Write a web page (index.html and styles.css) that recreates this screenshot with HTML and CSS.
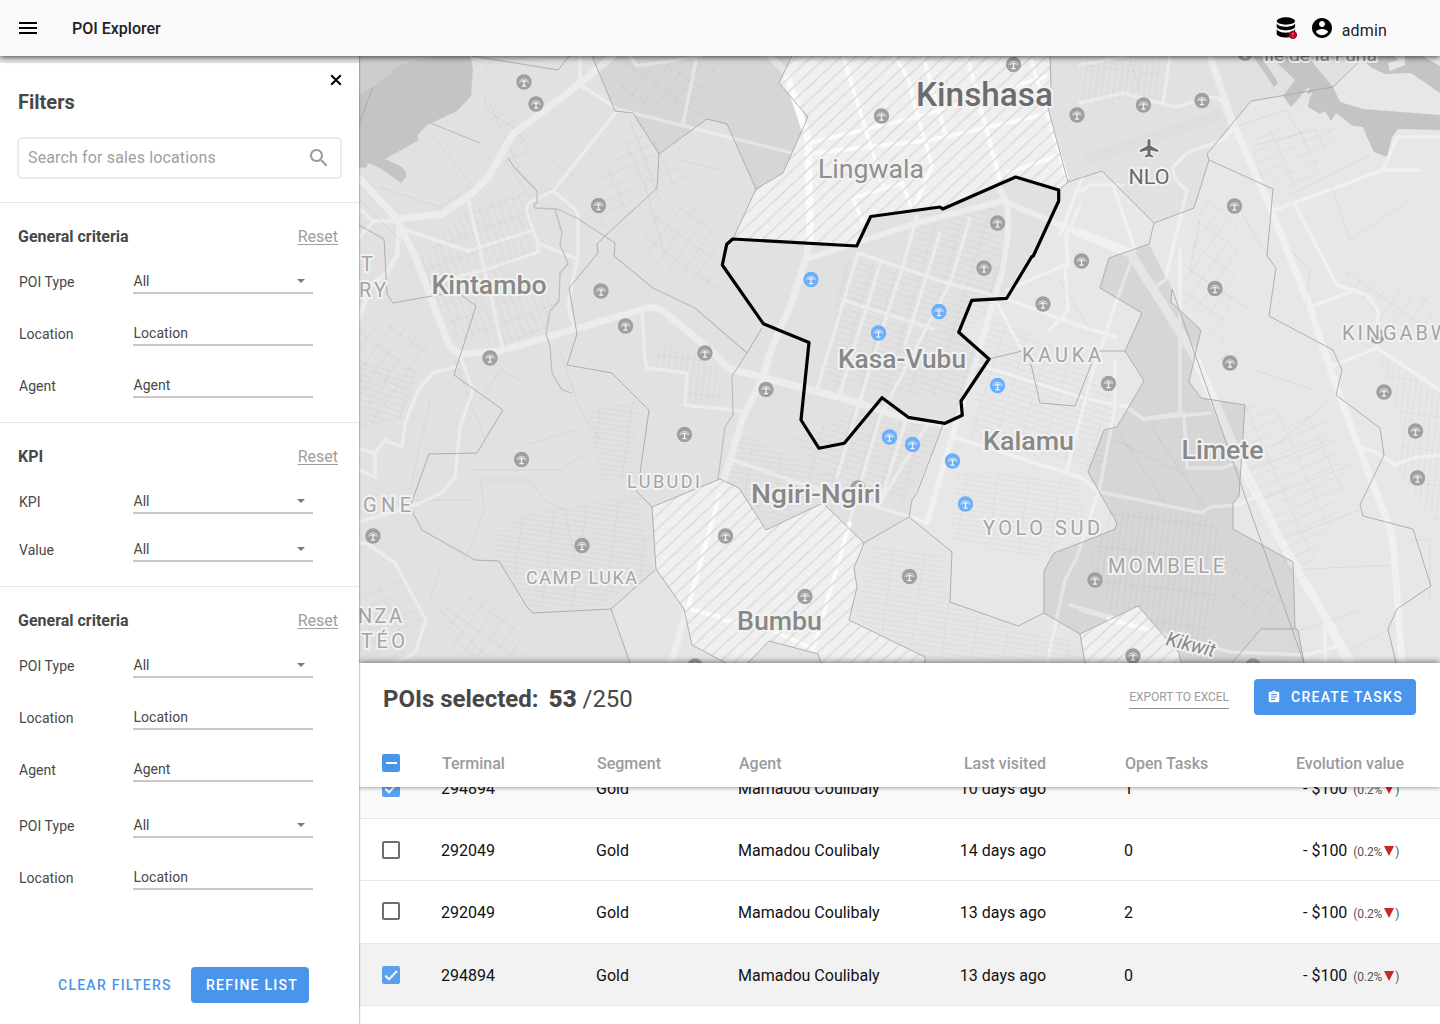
FILE: index.html
```html
<!DOCTYPE html>
<html lang="en">
<head>
<meta charset="utf-8">
<title>POI Explorer</title>
<link rel="stylesheet" href="styles.css">
</head>
<body>
<header class="topbar">
  <svg class="menu-icon" viewBox="0 0 24 24"><path d="M3 18h18v-2H3v2zm0-5h18v-2H3v2zm0-7v2h18V6H3z"/></svg>
  <h1 class="app-title">POI Explorer</h1>
  <svg class="db-icon" viewBox="0 0 24 24">
    <ellipse cx="10.900" cy="5" rx="9.200" ry="3.700"/>
    <path d="M1.700 7.500c1.200 2.300 5 3.300 9.200 3.300s8-1 9.200-3.300v3.500c-1.200 2.300-5 3.300-9.200 3.300s-8-1-9.200-3.300z"/>
    <path d="M1.700 13.300c1.200 2.300 5 3.400 9.200 3.400s8-1.100 9.200-3.400v4.900c-1.200 2.300-5 3.300-9.200 3.300s-8-1-9.200-3.300z"/>
    <circle class="alert" cx="17.900" cy="18.900" r="4.200"/>
    <path class="alert-mark" d="M17.900 16.800v2.300m0 1v1"/>
  </svg>
  <svg class="user-icon" viewBox="0 0 24 24"><path d="M12 2C6.480 2 2 6.480 2 12s4.480 10 10 10 10-4.480 10-10S17.520 2 12 2zm0 3c1.660 0 3 1.340 3 3s-1.340 3-3 3-3-1.340-3-3 1.340-3 3-3zm0 14.200c-2.500 0-4.710-1.280-6-3.220.030-1.990 4-3.080 6-3.080 1.990 0 5.970 1.090 6 3.080-1.290 1.940-3.500 3.220-6 3.220z"/></svg>
  <span class="user-name">admin</span>
</header>

<div class="workspace">
<aside class="filters">
  <div class="filters-head">
    <svg class="close-icon" viewBox="0 0 12 12"><path d="M1.200 1.200l9.600 9.600m0-9.600l-9.600 9.600"/></svg>
    <h2 class="filters-title">Filters</h2>
    <div class="search">
      <span>Search for sales locations</span>
      <svg viewBox="0 0 24 24"><path d="M15.500 14h-.790l-.280-.270C15.410 12.590 16 11.110 16 9.500 16 5.910 13.090 3 9.500 3S3 5.910 3 9.500 5.910 16 9.500 16c1.610 0 3.090-.590 4.230-1.570l.270.280v.790l5 4.990L20.490 19l-4.990-5zm-6 0C7.010 14 5 11.990 5 9.500S7.010 5 9.500 5 14 7.010 14 9.500 11.990 14 9.500 14z"/></svg>
    </div>
  </div>

  <section class="group">
    <div class="group-head"><h3>General criteria</h3><a class="reset">Reset</a></div>
    <div class="field"><label>POI Type</label><div class="control select">All</div></div>
    <div class="field"><label>Location</label><div class="control">Location</div></div>
    <div class="field"><label>Agent</label><div class="control">Agent</div></div>
  </section>

  <section class="group compact">
    <div class="group-head"><h3>KPI</h3><a class="reset">Reset</a></div>
    <div class="field"><label>KPI</label><div class="control select">All</div></div>
    <div class="field"><label>Value</label><div class="control select">All</div></div>
  </section>

  <section class="group">
    <div class="group-head"><h3>General criteria</h3><a class="reset">Reset</a></div>
    <div class="field"><label>POI Type</label><div class="control select">All</div></div>
    <div class="field"><label>Location</label><div class="control">Location</div></div>
    <div class="field"><label>Agent</label><div class="control">Agent</div></div>
    <div class="field spaced"><label>POI Type</label><div class="control select">All</div></div>
    <div class="field"><label>Location</label><div class="control">Location</div></div>
  </section>

  <div class="actions">
    <span class="text-btn">CLEAR FILTERS</span>
    <span class="btn refine">REFINE LIST</span>
  </div>
</aside>

<main class="content">
<svg class="map" viewBox="359 56 1081 607">
  <defs>
    <pattern id="hatch" width="10" height="10" patternUnits="userSpaceOnUse" patternTransform="rotate(47)"><path class="hatch-line" d="M5 0v10"/></pattern>
    <pattern id="gridA" width="7" height="19" patternUnits="userSpaceOnUse" patternTransform="rotate(-20)"><path class="street" d="M0 .5h7M.5 0v19"/></pattern>
    <pattern id="gridB" width="24" height="6" patternUnits="userSpaceOnUse" patternTransform="rotate(17)"><path class="street" d="M0 .5h24M.5 0v6"/></pattern>
    <pattern id="gridC" width="31" height="5" patternUnits="userSpaceOnUse" patternTransform="rotate(8)"><path class="street" d="M0 .5h31M.5 0v5"/></pattern>
    <pattern id="gridD" width="6" height="34" patternUnits="userSpaceOnUse" patternTransform="rotate(7)"><path class="street" d="M0 .5h6M.5 0v34"/></pattern>
    <pattern id="gridE" width="27" height="11" patternUnits="userSpaceOnUse" patternTransform="rotate(-24)"><path class="street" d="M0 .5h27M.5 0v11"/></pattern>
    <pattern id="gridF" width="13" height="22" patternUnits="userSpaceOnUse" patternTransform="rotate(35)"><path class="street" d="M0 .5h13M.5 0v22"/></pattern>
    <symbol id="poi" viewBox="-8 -8 16 16">
      <circle r="7.700"/>
      <path class="arc" d="M-4.700 .6A4.800 4.800 0 0 1 4.700 .6"/>
      <path class="dome" d="M-3.500 .7A3.600 3.600 0 0 1 3.500 .7L2.200 .1 1.100-.3H-1.100L-2.200 .1z"/>
      <path class="mast" d="M0-2v6M-2.100 4.200h4.200"/>
    </symbol>
  </defs>

  <rect class="land" x="359" y="56" width="1081" height="607"/>
  <!-- districts -->
  <path class="land-east" d="M1058 190L1068 182 1102 171 1154 223 1194 208 1209 160 1207 154 1251 101 1333 87 1363 56H1440V663H925L849 620 857 587 854 568 864 543 909 517 912 500 943 425 962 415 961 401 989 359 959 332 972 300 1007 298 1033 256 1058 201z"/>
  <path class="land-south" d="M611 609L655 570 684 609 692 645 726 663H630zM864 543L909 517 952 552 950 602 1018 626 1044 613 1080 634 1085 663H925L849 620 857 587 854 568zM769 641L818 654 821 663H748z"/>
  <path class="land-dark" d="M592 56L615 111 633 113 659 154 707 119 727 124 756 189 783 173 808 117 779 83 792 56z"/>
  <path class="land-dark" d="M1149 244L1109 258 1100 288 1142 313 1125 351 1144 381 1117 427 1104 430 1088 472 1117 523 1115 529 1080 543 1054 553 1044 571V613L1080 634 1138 606 1179 653 1181 663H1304L1298 630 1295 628 1293 562 1233 529V503L1239 496 1245 405 1201 398 1189 382 1194 360 1201 330 1171 302 1172 289z"/>
  <path class="land-mid" d="M1232 663L1261 629H1295L1304 663z"/>

  <!-- minor street grids -->
  <g class="grids">
    <path fill="url(#gridA)" d="M418 262L470 206 525 192 530 225 536 252 500 268 560 300 545 330 505 347 455 335z"/>
    <path fill="url(#gridE)" d="M485 100L515 103 530 160 560 190 540 195 500 150zM600 175L640 125 700 190 650 185 600 230zM1250 130L1340 125 1310 190 1260 180zM1240 400L1330 420 1350 480 1300 590 1250 500zM360 600L400 570 420 620 400 660 360 660z"/>
    <path fill="url(#gridF)" d="M625 60L720 70 700 115 620 100zM650 215L710 200 720 290 640 260zM360 330L420 320 440 345 380 420 360 410zM1340 270L1430 300 1440 340 1400 345zM1205 190L1240 230 1225 350 1180 300zM1230 540L1292 590 1290 625 1230 610zM440 600L500 590 530 660 450 660z"/>
    <path fill="url(#gridC)" d="M520 515L640 495 650 570 600 607 530 607 500 560 490 540zM735 430L840 480 770 525 740 488 722 480zM590 410L640 400 632 480 600 480zM870 545L945 555 950 602 1015 630 1070 640 1080 660H930L855 618zM957 470L1080 480 1085 520 1040 560 950 540z"/>
    <path fill="url(#gridB)" d="M847 255L1000 300 960 340 985 360 958 400 820 385zM860 410L940 425 905 500 850 500 790 440zM990 310L1060 350 1120 400 1100 470 970 440zM920 222L1003 205 1008 265 990 300 900 265zM360 360L420 370 400 420 360 430z"/>
    <path fill="url(#gridD)" d="M1110 510L1210 515 1230 560 1200 650 1110 610 1090 560zM665 340L720 370 720 400 690 405 686 373 650 365zM1376 350L1440 395V530L1395 465 1400 420zM1080 60L1160 60 1165 100 1080 100z"/>
    <path fill="url(#gridE)" d="M800 80L1050 70 1045 175 940 200 870 210 800 160zM660 510L720 490 840 520 850 620 760 640 700 640z"/>
  </g>
  <path class="lane" d="M486 70c3-15 30-12 60-8M485 95v14l30 20 15 20M360 200l40 40M380 187l60 20 30-20M505 160l30 45M427 130l50 60M550 160l30 20M630 120l30 80M645 185l20 70M680 160l40 10M480 400l20-30 20 10M470 470l90 0 30-20M480 480h50l15 20 20 10 10 50M480 480l5 30-20 50M455 360l30 80M560 350l20 60 20 30M575 430l-50 15M415 500l60 0M440 570l-10 30 60 60M430 400l-20 90M1060 280l30 50M1130 60l10 30M1225 130l60-20 20 30M1255 145l60-15 10 20M1290 195l80-40M1240 210l30 50M1250 470l80-30M1260 500l90-35M1280 540l80-30M1290 570l100-5M1270 450l60-50M1200 380l30-30M1255 370l60 20M1110 420l60 90M1150 425l60 90M1115 440l70 35M1330 180l20 60 60-40M1290 250l20 20-5 40M1300 630l60-20M1350 650l40-20M1120 150l100-40M1200 220l-10 50 60 40M1240 350l-20 20M1410 540l20 0v60"/>
  <path class="runway" d="M1085 160L1220 115"/>

  <!-- water -->
  <path class="shallow" d="M359 56H432L400 65 373 87 359 94z"/>
  <path class="water" d="M432 56H470L473 68 471 96 457 111 427 125 417 136 419 140 385 159 402 167 406 172V177L401 183 380 168 368 163 366 168 359 167V94L373 87 400 65z"/>
  <path class="water" d="M1253 56h8l17 27-4 4zM1270 56L1295 80 1283 96 1291 107 1306 90 1310 97 1308 107 1320 114 1325 111 1331 121 1336 113 1353 126 1363 127 1367 137 1374 152 1387 157 1392 137 1398 129 1440 130V115L1363 109 1340 102 1333 87 1307 56zM1358 56L1372 68 1385 74 1411 73 1440 93V66L1422 56H1405V65L1390 71 1388 63 1398 60 1395 56z"/>
  <path class="quay" d="M1292 108l17-20M1295 113l17-20"/>

  <!-- roads -->
  <g class="roads">
    <path class="w7" d="M359 178L397 219 442 214 470 195 488 178Q495 165 513 134L578 85 613 56"/>
    <path class="w4" d="M580 84V56M582 86L617 109 800 155M617 111L553 191 532 201Q525 207 527 214L538 243V252L487 269 440 282M553 191L574 208 578 214V256L568 305 575 331M403 229L468 251 532 231M468 199L503 349M540 244L577 259M359 208L373 221H397M359 238L374 221M642 313L645 360 647 368 687 373 685 405 741 411M460 356L473 390 460 427 455 477 442 493 410 507 359 522M458 366L433 373 418 390 405 423 402 447 385 440 375 453 359 449M375 455V477L359 470M359 543L368 544 395 563 426 620 415 653 395 663M630 56L637 66 700 56M697 56L683 124"/>
    <path class="w7" d="M398 222L415 256 448 343Q454 353 462 354L500 351 647 308Q655 306 663 311L697 339 720 359 727 368 860 403 902 418 945 424"/>
    <path class="w5" d="M399 230L397 256 386 274 370 286 359 319"/>
    <path class="w7" d="M770 56L790 76 808 139 810 223Q810 245 806 257L793 299 770 353 763 377 743 417 720 493 688 607 671 663"/>
    <path class="w6" d="M810 258L917 223 1003 201 1080 233 1130 253M967 56L1000 189 1008 206V232L1003 269 993 303 975 365 955 427 927 522"/>
    <path class="w4" d="M858 253L950 284 1007 299 1080 326 1116 337M880 264L840 393M858 253L817 390M917 216L903 266 893 296 858 407 837 477M940 233L905 345M970 219L950 283 880 417 850 520 813 650M845 301L933 329M930 420L880 503M907 417L880 503M733 460L790 480 927 522M953 437L1080 477 1100 492 1202 513 1210 507 1237 505 1257 497M980 365L1080 397 1127 407 1143 419 1210 413M1067 470L1090 380 1115 305 1133 257M1115 360V407L1100 487 1077 557 1065 580 1047 663M997 303L1022 350M1007 290L1065 265 1068 310 1050 330M1066 233L1068 265M1065 240L1080 205M1082 178L1060 235M1180 250V413L1143 419M1184 413L1187 468H1223L1238 462M1070 605L1140 625"/>
    <path class="w7" d="M1210 56L1233 123 1270 207 1310 307 1327 360 1357 443 1387 520Q1394 540 1395 567L1402 663"/>
    <path class="w9" d="M1080 233L1130 253 1160 300 1193 353 1243 467 1280 540 1327 620 1350 663"/>
    <path class="w4" d="M1080 103L1123 93 1175 107 1213 97Q1221 98 1223 103L1232 130 1223 140 1187 153 1173 167Q1172 180 1187 190L1165 280 1155 287M1113 185L1135 250M1080 192L1090 185H1123M1275 210L1383 170 1397 137 1440 137M1385 170H1420M1295 205L1337 285 1367 295 1378 310 1377 348 1330 367M1310 307L1350 292M1377 348L1440 390M1360 447L1375 452 1395 465 1413 458 1440 455M1080 610L1160 633 1230 652 1307 655 1338 646M1325 620V663M1170 56L1163 102M1080 65L1125 56"/>
  </g>

  <!-- highlighted northern and southern zones -->
  <g class="zones">
    <path class="zone" d="M792 56L779 83 808 117 783 173 756 189 733 239 857 246 871 217 940 207 943 209 1016 177 1059 190 1068 182 1048 108 1051 84 1050 56z"/>
    <path class="zone" d="M720 479L652 507 656 569 684 609 692 645 726 663H748L769 641 818 654 821 663H925V657L849 620 857 587 854 568 864 543 823 503 766 530 739 488zM1138 606L1080 634 1085 663H1181L1179 653z"/>
  </g>
  <g class="zone-roads">
    <path d="M843 56L883 186M893 56Q910 75 913 99L932 166 915 205M923 56L947 139M810 143L920 116 1047 76M813 153L930 140 1047 114M863 223L853 198 902 183 912 209M967 56L1000 180M1007 173L1057 156M1030 56L1067 179M720 493L688 607M850 522L813 650M690 609L720 617M722 620L760 625 812 648M1107 619L1150 630"/>
    <path class="wide" d="M787 76L808 139 810 223V242"/>
  </g>
  <g class="zone-hatch">
    <path d="M792 56L779 83 808 117 783 173 756 189 733 239 857 246 871 217 940 207 943 209 1016 177 1059 190 1068 182 1048 108 1051 84 1050 56z"/>
    <path d="M720 479L652 507 656 569 684 609 692 645 726 663H748L769 641 818 654 821 663H925V657L849 620 857 587 854 568 864 543 823 503 766 530 739 488zM1138 606L1080 634 1085 663H1181L1179 653z"/>
  </g>

  <!-- administrative boundaries -->
  <path class="river" d="M428 122L480 143M508 158L514 167 537 191V203L534 204 535 208 557 209 577 218 615 243M555 209L562 233 560 244 568 264 560 273 559 301 550 311 546 334 550 346 552 373 562 390 572 393M614 256L653 288 695 308 747 353 732 376 733 415 725 427 718 479"/>
  <path class="border" d="M472 56L558 70 569 56M592 56L615 111 633 113 659 154 707 119 727 124 756 189M659 154L657 188 605 236 597 244 598 253 569 288 577 334 569 359 567 365 612 373 649 410 640 473 637 492 652 507M615 243L614 256M359 225L384 239 387 294 393 303 443 294M460 294L476 306 454 375 503 410 477 453 429 454 410 507 422 530 475 560 499 561 527 607 533 613 611 609 655 570M611 609L630 663M373 87L359 124M943 425L917 493 912 500 909 517 864 543M909 517L952 552 950 602 1018 626 1044 613M989 359L1022 351M1099 351H1125M1030 360L1040 403 1075 406 1096 352M762 328L747 353M1068 182L1102 171 1154 223 1149 244M1154 223L1194 208 1209 160 1207 154 1251 101 1333 87 1363 58M1209 160L1273 189 1267 256 1276 268 1269 316 1333 350 1342 370 1336 395 1380 428 1384 455 1360 505 1363 516 1413 529 1431 586 1397 609 1388 629 1396 663M1232 663L1261 629H1295"/>
  <path class="border" d="M1149 244L1109 258 1100 288 1142 313 1125 351 1144 381 1117 427 1104 430 1088 472 1117 523 1115 529 1080 543 1054 553 1044 571V613L1080 634 1138 606 1179 653 1181 663M1304 663L1298 630 1295 628 1293 562 1233 529V503L1239 496 1245 405 1201 398 1189 382 1194 360 1201 330 1171 302 1172 289z"/>
  <path class="border" d="M792 56L779 83 808 117 783 173 756 189 733 239M1059 190L1068 182 1048 108 1051 84 1050 56M720 479L652 507 656 569 684 609 692 645 726 663M748 663L769 641 818 654 821 663M925 663V657L849 620 857 587 854 568 864 543 823 503 766 530 739 488 720 479M1080 634L1085 663"/>

  <!-- points of interest -->
  <g class="pois">
    <use href="#poi" x="516" y="74" width="16" height="16"/><use href="#poi" x="528" y="96" width="16" height="16"/>
    <use href="#poi" x="590.500" y="197.500" width="16" height="16"/><use href="#poi" x="593" y="283" width="16" height="16"/>
    <use href="#poi" x="617.500" y="318" width="16" height="16"/><use href="#poi" x="482" y="350" width="16" height="16"/>
    <use href="#poi" x="697" y="345" width="16" height="16"/><use href="#poi" x="758" y="381.500" width="16" height="16"/>
    <use href="#poi" x="676.500" y="426.500" width="16" height="16"/><use href="#poi" x="513.500" y="451.500" width="16" height="16"/>
    <use href="#poi" x="365" y="528" width="16" height="16"/><use href="#poi" x="574" y="537.500" width="16" height="16"/>
    <use href="#poi" x="717.500" y="528" width="16" height="16"/><use href="#poi" x="797" y="588.500" width="16" height="16"/>
    <use href="#poi" x="901.500" y="568.500" width="16" height="16"/><use href="#poi" x="850" y="480" width="16" height="16"/>
    <use href="#poi" x="687" y="658" width="16" height="16"/><use href="#poi" x="873.500" y="108" width="16" height="16"/>
    <use href="#poi" x="1005.500" y="56.500" width="16" height="16"/><use href="#poi" x="1069" y="107" width="16" height="16"/>
    <use href="#poi" x="1135.500" y="97" width="16" height="16"/><use href="#poi" x="1194" y="92.500" width="16" height="16"/>
    <use href="#poi" x="989.500" y="215" width="16" height="16"/><use href="#poi" x="976" y="260" width="16" height="16"/>
    <use href="#poi" x="1035" y="296" width="16" height="16"/><use href="#poi" x="1073.500" y="253" width="16" height="16"/>
    <use href="#poi" x="1226.500" y="198" width="16" height="16"/><use href="#poi" x="1207" y="280.500" width="16" height="16"/>
    <use href="#poi" x="1222" y="355" width="16" height="16"/><use href="#poi" x="1100.500" y="375.500" width="16" height="16"/>
    <use href="#poi" x="1369" y="328" width="16" height="16"/><use href="#poi" x="1376" y="384" width="16" height="16"/>
    <use href="#poi" x="1407.500" y="423" width="16" height="16"/><use href="#poi" x="1409.500" y="470" width="16" height="16"/>
    <use href="#poi" x="1087" y="572" width="16" height="16"/><use href="#poi" x="1125" y="648" width="16" height="16"/>
    <use href="#poi" x="1245" y="658" width="16" height="16"/><use href="#poi" x="1237" y="45" width="16" height="16"/>
  </g>

  <!-- place labels -->
  <g class="place">
    <text class="city" x="916" y="105.500" textLength="137" lengthAdjust="spacingAndGlyphs">Kinshasa</text>
    <text class="light" x="818" y="177.500" textLength="106" lengthAdjust="spacingAndGlyphs">Lingwala</text>
    <text x="431.500" y="293.700" textLength="115" lengthAdjust="spacingAndGlyphs">Kintambo</text>
    <text x="838" y="367.700" textLength="128" lengthAdjust="spacingAndGlyphs">Kasa-Vubu</text>
    <text x="751" y="502.700" textLength="130" lengthAdjust="spacingAndGlyphs">Ngiri-Ngiri</text>
    <text x="983" y="450" textLength="91" lengthAdjust="spacingAndGlyphs">Kalamu</text>
    <text x="737" y="630" textLength="85" lengthAdjust="spacingAndGlyphs">Bumbu</text>
    <text x="1181.500" y="459" textLength="82" lengthAdjust="spacingAndGlyphs">Limete</text>
  </g>
  <g class="quarter">
    <text x="361" y="271">T</text>
    <text x="359" y="297" textLength="27">RY</text>
    <text x="363" y="512" textLength="48">GNE</text>
    <text x="358" y="623" textLength="44">NZA</text>
    <text x="361" y="648" textLength="44">TÉO</text>
    <text class="small" x="627" y="488" textLength="73">LUBUDI</text>
    <text class="small" x="526" y="584" textLength="111">CAMP LUKA</text>
    <text x="1022" y="361.500" textLength="79">KAUKA</text>
    <text x="1342" y="340" textLength="122">KINGABWA</text>
    <text x="983" y="535" textLength="117">YOLO SUD</text>
    <text x="1108" y="573" textLength="116">MOMBELE</text>
  </g>
  <g class="spot">
    <text x="1128.500" y="184" textLength="41" lengthAdjust="spacingAndGlyphs">NLO</text>
    <text class="river-name" x="1264" y="61" textLength="113" lengthAdjust="spacingAndGlyphs">Île de la Funa</text>
    <text class="road-name" transform="translate(1165 645) rotate(14)" textLength="50" lengthAdjust="spacingAndGlyphs">Kikwit</text>
    <path class="plane" d="M1149 139c1.200 0 1.500 1.200 1.500 2.500v4.300l7.700 4.200v2l-7.700-1.800v4.100l2.600 1.600v1.500l-4.100-.9-4.100.9v-1.500l2.600-1.600v-4.100l-7.700 1.800v-2l7.700-4.200v-4.300c0-1.300.3-2.500 1.500-2.500z"/>
  </g>

  <g class="pois selected">
    <use href="#poi" x="803" y="271.500" width="16" height="16"/><use href="#poi" x="931" y="303.500" width="16" height="16"/>
    <use href="#poi" x="870.500" y="325" width="16" height="16"/><use href="#poi" x="989.500" y="377.500" width="16" height="16"/>
    <use href="#poi" x="881.500" y="429" width="16" height="16"/><use href="#poi" x="904.500" y="436.500" width="16" height="16"/>
    <use href="#poi" x="944.500" y="453" width="16" height="16"/><use href="#poi" x="957.500" y="496" width="16" height="16"/>
  </g>
  <path class="selection" d="M732.700 239L856.700 246 870.700 216.500 940 207 942.700 209 1015.700 177 1058.700 190V201L1033.300 256 1031.700 256.700 1006.700 298.300 971.700 300.300 958.700 332.300 989 359 961 401 962.300 415.300 945 423.300 908.300 417.300 882 397.700 844.300 443.300 819 448.300 801 420 809 342.500 763.300 323.700 722.300 265 726.700 244.300z"/>
</svg>

<section class="results">
  <div class="results-head">
    <h2 class="results-title">POIs selected: <b>53</b> <span>/250</span></h2>
    <a class="export">EXPORT TO EXCEL</a>
    <span class="btn create">
      <svg viewBox="0 0 24 24"><path d="M19 3h-4.180C14.400 1.840 13.300 1 12 1s-2.400.840-2.820 2H5c-1.100 0-2 .900-2 2v14c0 1.100.900 2 2 2h14c1.100 0 2-.900 2-2V5c0-1.100-.900-2-2-2zm-7 0c.550 0 1 .450 1 1s-.450 1-1 1-1-.450-1-1 .450-1 1-1zm2 14H7v-2h7v2zm3-4H7v-2h10v2zm0-4H7V7h10v2z"/></svg>
      CREATE TASKS
    </span>
  </div>
  <div class="row columns">
    <span class="box partial"></span><span>Terminal</span><span>Segment</span><span>Agent</span><span class="visited">Last visited</span><span>Open Tasks</span><span class="evo-head">Evolution value</span>
  </div>
  <div class="rows">
    <div class="row first">
      <span class="box checked"><svg viewBox="0 0 18 18"><path d="M3.200 9.500l3.800 3.800 8-8.300"/></svg></span><span>294894</span><span>Gold</span><span>Mamadou Coulibaly</span><span class="visited">10 days ago</span><span>1</span><span class="evo">- $100<small>(0.2%<i class="down"></i>)</small></span>
    </div>
    <div class="row">
      <span class="box"></span><span>292049</span><span>Gold</span><span>Mamadou Coulibaly</span><span class="visited">14 days ago</span><span>0</span><span class="evo">- $100<small>(0.2%<i class="down"></i>)</small></span>
    </div>
    <div class="row third">
      <span class="box"></span><span>292049</span><span>Gold</span><span>Mamadou Coulibaly</span><span class="visited">13 days ago</span><span>2</span><span class="evo">- $100<small>(0.2%<i class="down"></i>)</small></span>
    </div>
    <div class="row active">
      <span class="box checked"><svg viewBox="0 0 18 18"><path d="M3.200 9.500l3.800 3.800 8-8.300"/></svg></span><span>294894</span><span>Gold</span><span>Mamadou Coulibaly</span><span class="visited">13 days ago</span><span>0</span><span class="evo">- $100<small>(0.2%<i class="down"></i>)</small></span>
    </div>
  </div>
</section>
</main>
</div>
</body>
</html>
```
FILE: styles.css
```css
* { box-sizing: border-box; }
body {
  margin: 0;
  width: 1440px;
  height: 1024px;
  overflow: hidden;
  display: flex;
  flex-direction: column;
  background: #fff;
  font-family: Roboto, "Liberation Sans", sans-serif;
  color: #484848;
}
h1, h2, h3 { margin: 0; }

/* top bar */
.topbar {
  flex: none;
  height: 56px;
  display: flex;
  align-items: center;
  padding: 0 53px 0 16px;
  background: #fafafa;
  box-shadow: 0 1px 6px rgba(0, 0, 0, .75);
  position: relative;
  z-index: 3;
}
.menu-icon { width: 24px; height: 24px; }
.app-title { margin: 1px auto 0 32px; font-size: 16px; font-weight: 500; letter-spacing: 0; color: #222; }
.db-icon { width: 24px; height: 24px; margin-right: 11px; }
.db-icon .alert { fill: #b8002a; }
.db-icon .alert-mark { stroke: #e9a3b1; stroke-width: 1; }
.user-icon { width: 24px; height: 24px; margin-right: 8px; }
.user-name { font-size: 16px; margin-top: 4px; letter-spacing: .15px; color: #222; }

.workspace { flex: 1; min-height: 0; display: flex; }

/* filter panel */
.filters {
  flex: none;
  width: 359px;
  display: flex;
  flex-direction: column;
  border-top: 7px solid #e6e6e6;
  background: #fff;
  box-shadow: 0 0 2px rgba(0, 0, 0, .6);
  position: relative;
  z-index: 2;
}
.filters-head { height: 139px; padding: 11px 17px 0; display: flex; flex-direction: column; }
.close-icon { width: 12px; height: 12px; align-self: flex-end; fill: none; stroke: #000; stroke-width: 2; }
.filters-title { margin: 4px 0 0 1px; font-size: 20px; line-height: 24px; font-weight: 700; }
.search {
  height: 42px;
  margin-top: 23px;
  padding: 0 9px;
  display: flex;
  align-items: center;
  justify-content: space-between;
  border: 2px solid #ebebeb;
  border-radius: 5px;
  color: #a0a0a0;
  font-size: 16px;
  letter-spacing: .14px;
}
.search span { margin-top: -1px; }
.search svg { width: 24px; height: 24px; fill: #9b9b9b; }

.group { border-top: 1px solid #e7e7e7; padding: 24px 20px 24px 18px; display: flex; flex-direction: column; gap: 26px; }
.group-head { display: flex; justify-content: space-between; height: 20px; line-height: 20px; font-size: 16px; margin-bottom: -5px; }
.group-head h3 { font-size: 16px; font-weight: 700; }
.reset { margin-right: 1px; color: #9e9e9e; text-decoration: underline; text-underline-offset: 2px; text-decoration-thickness: 1px; }
.field { display: flex; height: 26px; font-size: 14px; letter-spacing: .03px; }
.field label { width: 115px; padding-left: 1px; line-height: 29px; }
.field.spaced { margin-top: 4px; }
.control { width: 180px; padding-left: .5px; line-height: 26px; border-bottom: 2px solid #c8c8c8; }
.select { display: flex; justify-content: space-between; }
.select::after { content: ""; margin: 11px 8.500px 0 0; height: 0; border: 4.500px solid transparent; border-top: 4.500px solid #7a7a7a; border-bottom: 0; }
.compact { gap: 22px; }
.compact .group-head { margin-bottom: -1px; }

.actions { margin: auto 50px 21px 58px; display: flex; align-items: center; justify-content: space-between; height: 36px; }
.text-btn { font-size: 14px; font-weight: 500; letter-spacing: 1.250px; color: #4a95ea; }
.btn {
  height: 36px;
  display: flex;
  align-items: center;
  justify-content: center;
  border-radius: 4px;
  background: #4a95ec;
  color: #fff;
  font-size: 14px;
  font-weight: 500;
  letter-spacing: 1.250px;
}
.refine { width: 118px; padding-left: 4px; }

/* map */
.content { flex: 1; min-width: 0; display: flex; flex-direction: column; }
.map { flex: none; width: 1081px; height: 607px; display: block; }
.map path { stroke-linejoin: round; }
.land { fill: #e1e1e1; }
.land-east { fill: #e7e7e7; }
.land-south { fill: #e5e5e5; }
.land-dark { fill: #d6d6d6; }
.land-mid { fill: #d9d9d9; }
.shallow { fill: #cdcdcd; }
.water { fill: #c4c4c4; }
.quay { fill: none; stroke: #e4e4e4; stroke-width: 2; }
.street, .lane { fill: none; stroke: #000; stroke-opacity: .05; stroke-width: 1; }
.grids { opacity: .6; }
.runway { stroke: #dedede; stroke-width: 11; }
.roads path { fill: none; stroke: #fff; stroke-linecap: round; }
.roads { opacity: .38; }
.w4 { stroke-width: 3.500; }
.w5 { stroke-width: 5; }
.w6 { stroke-width: 6; }
.w7 { stroke-width: 7; }
.w9 { stroke-width: 9; }
.zone { fill: #f1f1f1; fill-opacity: .88; }
.zone-roads { fill: none; stroke: #fbfbfb; stroke-width: 4; }
.zone-roads .wide { stroke-width: 7; }
.zone-hatch { fill: url(#hatch); }
.hatch-line { stroke: #d8d8d8; stroke-width: 1.400; }
.river { fill: none; stroke: #bebebe; stroke-width: 1.300; }
.border { fill: none; stroke: #a8a8a8; stroke-width: .9; }
.pois { fill: #9f9f9f; }
.selected { fill: #6aaffc; }
.arc { fill: none; stroke: #ececec; stroke-width: .8; }
.dome { fill: #f0f0f0; fill-opacity: .85; }
.mast { fill: none; stroke: #f3f3f3; stroke-width: 1.300; }
.map text { font-family: Roboto, sans-serif; stroke: #f2f2f2; stroke-width: 4px; stroke-linejoin: round; paint-order: stroke; }
.place text { font-size: 26px; font-weight: 500; fill: #888; }
.place .light { font-weight: 400; fill: #8f8f8f; }
.place .city { font-size: 34px; fill: #6c6c6c; }
.quarter text { font-size: 20px; fill: #a4a4a4; }
.quarter .small { font-size: 18px; }
.spot text { font-size: 21px; font-weight: 400; fill: #6a6a6a; }
.spot .river-name { font-size: 17px; fill: #888; }
.spot .road-name { font-size: 20px; font-style: italic; fill: #858585; }
.plane { fill: #6c6c6c; stroke: #f0f0f0; stroke-width: 2.500; paint-order: stroke; }
.selection { fill: none; stroke: #000; stroke-width: 3.200; }

/* results */
.results {
  flex: 1;
  min-height: 0;
  display: flex;
  flex-direction: column;
  background: #fff;
  box-shadow: 0 0 7px rgba(0, 0, 0, .65);
  position: relative;
  z-index: 1;
}
.results-head { height: 77px; padding: 16px 24px 0; display: flex; align-items: flex-start; }
.results-title { flex: 1; font-size: 24px; line-height: 40px; font-weight: 700; white-space: pre; letter-spacing: -.03px; }
.results-title b { margin-left: 4.500px; }
.results-title span { font-weight: 400; }
.export { margin: 10px 25px 0 0; padding-bottom: 2px; font-size: 12px; line-height: 17px; letter-spacing: -.04px; color: #9b9b9b; border-bottom: 1px solid #8f8f8f; }
.create { width: 162px; }
.create svg { width: 14px; height: 14px; margin-right: 10px; fill: #fff; }

.row {
  flex: none;
  display: grid;
  grid-template-columns: 60px 155px 142px 200px 186px 179px 1fr;
  align-items: center;
  height: 62px;
  padding: 1px 0 0 22px;
  border-bottom: 1px solid #e6e6e6;
  font-size: 16px;
  color: #111;
  white-space: nowrap;
}
.visited { width: 108px; text-align: right; }
.columns {
  height: 47px;
  padding: 0 0 0 23px;
  border: 0;
  background: #fff;
  box-shadow: 0 1px 4px rgba(0, 0, 0, .35);
  clip-path: inset(0 0 -8px 0);
  position: relative;
  z-index: 1;
  font-weight: 500;
  color: #9b9b9b;
}
.columns .visited { width: 107px; }
.evo-head { margin-left: -8px; }
.rows { flex: 1; min-height: 0; overflow: hidden; }
.first { margin-top: -30px; background: #fafafa; }
.third { height: 63px; padding-top: 0; }
.active { background: #f2f2f2; }
.box { width: 18px; height: 18px; border: 2px solid #6e6e6e; border-radius: 2px; }
.rows .box { margin-left: .5px; }
.third .box { margin-bottom: 2px; }
.checked { border: 0; background: #5a9ff0; }
.checked svg { display: block; width: 18px; height: 18px; fill: none; stroke: #f5f9ff; stroke-width: 2; }
.partial { margin-bottom: 1px; border: 0; background: #4a95ec; display: flex; align-items: center; justify-content: center; }
.partial::after { content: ""; width: 11px; height: 2px; background: #fff; }
.evo small { margin-left: 6px; font-size: 12px; color: #555; letter-spacing: -.15px; }
.down { display: inline-block; margin: 0 1px 0 2px; border: 5px solid transparent; border-top: 10px solid #c62828; border-bottom: 0; }
```
